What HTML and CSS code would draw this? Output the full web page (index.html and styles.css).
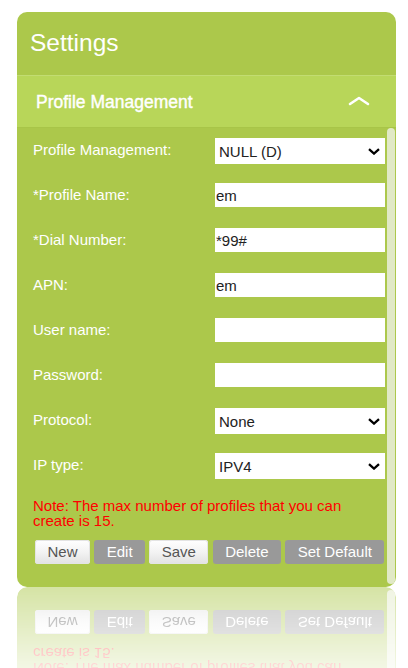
FILE: index.html
```html
<!DOCTYPE html>
<html>
<head>
<meta charset="utf-8">
<link rel="stylesheet" href="styles.css">
</head>
<body>
<div class="card">
  <div class="hdr">Settings</div>
  <div class="sub">
    <span class="sub-title">Profile Management</span>
    <svg class="up" width="22" height="10" viewBox="0 0 22 10"><path d="M2 8 L11 2 L20 8" fill="none" stroke="#fff" stroke-width="2.6" stroke-linecap="round" stroke-linejoin="round"/></svg>
  </div>
  <div class="body">
    <div class="content">
      <div class="row">
        <label class="lbl">Profile Management:</label>
        <span class="selwrap"><select class="ctl sel"><option>NULL (D)</option></select><svg class="dn" width="12" height="7" viewBox="0 0 12 7"><path d="M1 1.2 L6 5.6 L11 1.2" fill="none" stroke="#000" stroke-width="2.3"/></svg></span>
      </div>
      <div class="row">
        <label class="lbl">*Profile Name:</label>
        <input class="ctl txt" type="text" value="em">
      </div>
      <div class="row">
        <label class="lbl">*Dial Number:</label>
        <input class="ctl txt" type="text" value="*99#">
      </div>
      <div class="row">
        <label class="lbl">APN:</label>
        <input class="ctl txt" type="text" value="em">
      </div>
      <div class="row">
        <label class="lbl">User name:</label>
        <input class="ctl txt" type="text" value="">
      </div>
      <div class="row">
        <label class="lbl">Password:</label>
        <input class="ctl txt" type="password" value="">
      </div>
      <div class="row">
        <label class="lbl">Protocol:</label>
        <span class="selwrap"><select class="ctl sel"><option>None</option></select><svg class="dn" width="12" height="7" viewBox="0 0 12 7"><path d="M1 1.2 L6 5.6 L11 1.2" fill="none" stroke="#000" stroke-width="2.3"/></svg></span>
      </div>
      <div class="row">
        <label class="lbl">IP type:</label>
        <span class="selwrap"><select class="ctl sel"><option>IPV4</option></select><svg class="dn" width="12" height="7" viewBox="0 0 12 7"><path d="M1 1.2 L6 5.6 L11 1.2" fill="none" stroke="#000" stroke-width="2.3"/></svg></span>
      </div>
      <p class="note">Note: The max number of profiles that you can create is 15.</p>
      <div class="btns">
        <button class="btn on">New</button>
        <button class="btn off">Edit</button>
        <button class="btn on">Save</button>
        <button class="btn off">Delete</button>
        <button class="btn off">Set Default</button>
      </div>
    </div>
    <div class="sbar"><div class="thumb"></div></div>
  </div>
</div>
<div class="reflect" aria-hidden="true">
  <div class="body rbody">
    <div class="content rcontent">
      <p class="note">Note: The max number of profiles that you can create is 15.</p>
      <div class="btns">
        <span class="btn on">New</span>
        <span class="btn off">Edit</span>
        <span class="btn on">Save</span>
        <span class="btn off">Delete</span>
        <span class="btn off">Set Default</span>
      </div>
    </div>
    <div class="sbar"><div class="thumb"></div></div>
  </div>
</div>
</body>
</html>
```
FILE: styles.css
```css
html, body {
  margin: 0;
  padding: 0;
  background: #ffffff;
  font-family: "Liberation Sans", Arial, sans-serif;
}

.card {
  margin: 12px 0 0 17px;
  width: 379px;
  height: 575px;
  border-radius: 10px;
  background: #acc84b;
  overflow: hidden;
  display: flex;
  flex-direction: column;
}

.hdr {
  height: 63px;
  flex: none;
  box-sizing: border-box;
  padding: 17px 0 0 13px;
  color: #ffffff;
  font-size: 24.5px;
  line-height: 28px;
}

.sub {
  height: 53px;
  flex: none;
  box-sizing: border-box;
  background: #b8d659;
  border-top: 1px solid #c2dc72;
  border-bottom: 1px solid #a8c548;
  display: flex;
  align-items: center;
  justify-content: space-between;
  padding: 0 26px 0 19px;
  color: #ffffff;
}

.sub-title {
  font-size: 17.5px;
  line-height: 20px;
  padding-top: 1px;
  -webkit-text-stroke: 0.4px #ffffff;
}

.up {
  display: block;
  margin-top: -2px;
}

.body {
  flex: 1;
  min-height: 0;
  display: flex;
  overflow: hidden;
}

.content {
  flex: 1;
  min-width: 0;
  box-sizing: border-box;
  padding: 10px 2px 23px 16px;
}

.sbar {
  flex: none;
  width: 9px;
  padding: 0 1px 3px 0;
  box-sizing: border-box;
  display: flex;
}

.thumb {
  flex: 1;
  background: #e1e9c6;
  border-radius: 4px;
}

.row {
  display: flex;
  align-items: flex-start;
  height: 26px;
  margin-bottom: 19px;
}

.lbl {
  width: 182px;
  flex: none;
  color: #ffffff;
  font-size: 15px;
  line-height: 24px;
}

.ctl {
  box-sizing: border-box;
  width: 170px;
  margin: 0;
  border: none;
  border-radius: 0;
  outline: none;
  background: #ffffff;
  font-family: "Liberation Sans", Arial, sans-serif;
  font-size: 15px;
  color: #222222;
}

.txt {
  height: 24px;
  padding: 0 0 0 1px;
}

.selwrap {
  position: relative;
  display: block;
  width: 170px;
  height: 26px;
}

.sel {
  display: block;
  height: 26px;
  padding: 0 0 0 4px;
  -webkit-appearance: none;
  -moz-appearance: none;
  appearance: none;
}

.dn {
  position: absolute;
  right: 5px;
  top: 10px;
  pointer-events: none;
}

.note {
  margin: 0 0 12px 0;
  max-width: 340px;
  color: #ff0000;
  font-size: 15px;
  line-height: 15px;
}

.btns {
  display: flex;
  gap: 4.2px;
  padding-left: 2px;
}

.btn {
  display: block;
  box-sizing: border-box;
  height: 24px;
  padding: 0 12.5px;
  border: none;
  border-radius: 3px;
  font-family: "Liberation Sans", Arial, sans-serif;
  font-size: 15px;
  line-height: 24px;
}

.btn.on {
  background: linear-gradient(to bottom, #ffffff 0%, #f3f3f3 50%, #e2e2e2 100%);
  color: #555555;
  box-shadow: inset 0 0 0 1px #e4e4e4;
}

.btn.off {
  background: #999999;
  color: #ffffff;
}

/* mirrored reflection under the card */
.reflect {
  margin-left: 17px;
  width: 379px;
  height: 114px;
  overflow: hidden;
  border-radius: 10px;
  background: #acc84b;
  display: flex;
  flex-direction: column;
  justify-content: flex-end;
  transform: scaleY(-1);
  -webkit-mask-image: linear-gradient(to bottom, rgba(0, 0, 0, 0) 0%, rgba(0, 0, 0, 0.5) 100%);
  mask-image: linear-gradient(to bottom, rgba(0, 0, 0, 0) 0%, rgba(0, 0, 0, 0.5) 100%);
}

.rbody {
  flex: none;
  height: 114px;
  align-items: stretch;
}

.rcontent {
  display: flex;
  flex-direction: column;
  justify-content: flex-end;
  padding-top: 0;
}
```
